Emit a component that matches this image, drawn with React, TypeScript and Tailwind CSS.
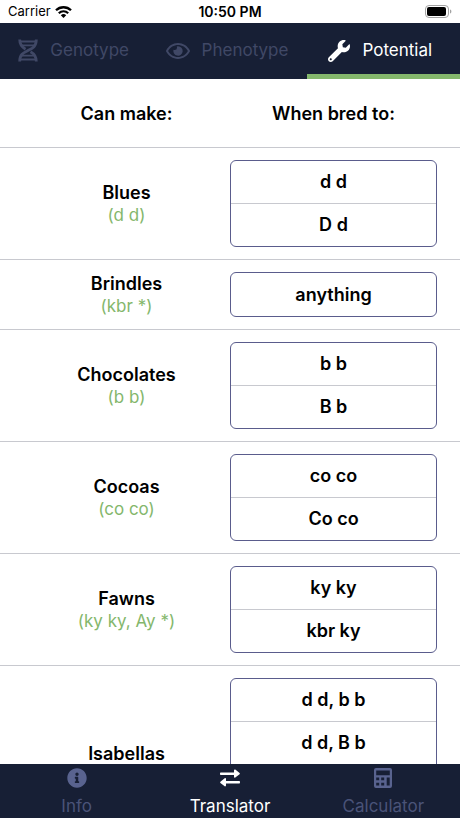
import type { ReactNode } from 'react'
import { FaInfoCircle, FaRegEye, FaWrench } from 'react-icons/fa'

interface Pairing {
  name: string
  genotype: string
  mates: string[]
}

const pairings: Pairing[] = [
  { name: 'Blues', genotype: '(d d)', mates: ['d d', 'D d'] },
  { name: 'Brindles', genotype: '(kbr *)', mates: ['anything'] },
  { name: 'Chocolates', genotype: '(b b)', mates: ['b b', 'B b'] },
  { name: 'Cocoas', genotype: '(co co)', mates: ['co co', 'Co co'] },
  { name: 'Fawns', genotype: '(ky ky, Ay *)', mates: ['ky ky', 'kbr ky'] },
  { name: 'Isabellas', genotype: '(d d, b b)', mates: ['d d, b b', 'd d, B b', 'D d, b b', 'D d, B b'] },
]

function WifiIcon() {
  return (
    <svg viewBox="0 0 17 12" className="w-[17px] h-3" fill="none" stroke="currentColor" aria-hidden="true">
      <path d="M1 4.3a10.700 10.700 0 0 1 15 0" strokeWidth="2.300" />
      <path d="M3.800 7.200a6.700 6.700 0 0 1 9.400 0" strokeWidth="2.200" />
      <path d="M8.500 12 5.800 9.300a3.900 3.900 0 0 1 5.400 0Z" fill="currentColor" stroke="none" />
    </svg>
  )
}

function BatteryIcon() {
  return (
    <svg viewBox="0 0 27 13" className="w-[27px] h-[13px]" aria-hidden="true">
      <rect x="0.500" y="0.500" width="23" height="12" rx="3.500" fill="none" stroke="#a3a3a3" />
      <rect x="2" y="2" width="19" height="9" rx="2" fill="#000" />
      <path d="M25 4.500v4c.9-.3 1.400-1.100 1.400-2s-.5-1.700-1.400-2Z" fill="#a3a3a3" />
    </svg>
  )
}

function DnaIcon() {
  return (
    <svg viewBox="0 0 20 23" className="w-5 h-[23px]" fill="none" stroke="currentColor" aria-hidden="true">
      <path d="M18.300 0.500C18.300 8 14 9.500 10 11.500S1.700 15 1.700 22.500" strokeWidth="2.800" />
      <path d="M1.700 0.500C1.700 6.500 4.500 8.500 7.500 10.200M18.300 22.500c0-6-2.800-8-5.800-9.700" strokeWidth="2.800" />
      <path d="M2 2.500h16M4 6.300h12M4 16.700h12M2 20.500h16" strokeWidth="1.800" />
    </svg>
  )
}

function SwapIcon() {
  return (
    <svg viewBox="0 0 22 18" className="w-[22px] h-[18px]" fill="currentColor" aria-hidden="true">
      <path d="M1.500 3.500H15V1.200c0-.8.8-1 1.300-.6l4.300 3.500c.4.400.4.800 0 1.200l-4.300 3.300c-.5.400-1.300.1-1.300-.6V6H1.500c-.7 0-.7-2.500 0-2.500Z" />
      <path d="M20.500 12H7V9.800c0-.8-.8-1-1.300-.6l-4.300 3.500c-.4.400-.4.800 0 1.200l4.300 3.300c.5.400 1.300.1 1.300-.6v-2.100h13.500c.7 0 .7-2.500 0-2.500Z" />
    </svg>
  )
}

function CalculatorIcon() {
  return (
    <svg viewBox="0 0 18 20" className="w-[18px] h-5" fill="currentColor" fillRule="evenodd" aria-hidden="true">
      <path d="M2 0h14a2 2 0 0 1 2 2v16a2 2 0 0 1-2 2H2a2 2 0 0 1-2-2V2a2 2 0 0 1 2-2ZM2.200 2.500v4.700h13.600V2.500ZM2.200 9.500v2.800h3V9.500ZM7.200 9.500v2.800h3V9.500ZM2.200 14.700v2.800h3v-2.800ZM7.200 14.700v2.800h3v-2.800ZM12.700 9.500v8h3v-8Z" />
    </svg>
  )
}

function StatusBar() {
  return (
    <div className="grid grid-cols-3 items-center h-[23px] shrink-0 px-2 text-[13px]">
      <span className="flex items-center gap-1">
        Carrier
        <WifiIcon />
      </span>
      <span className="text-center text-sm font-semibold">10:50 PM</span>
      <span className="flex justify-end">
        <BatteryIcon />
      </span>
    </div>
  )
}

interface TabProps {
  icon: ReactNode
  label: string
  active?: boolean
}

function TopTab({ icon, label, active }: TabProps) {
  return (
    <button
      type="button"
      aria-pressed={!!active}
      className={`flex items-center justify-center gap-3 border-b-[5px] pt-1 pr-1.5 text-[17px] ${
        active ? 'border-[#84b76c] text-white' : 'border-transparent text-[#404866]'
      }`}
    >
      {icon}
      {label}
    </button>
  )
}

function BottomTab({ icon, label, active }: TabProps) {
  return (
    <button
      type="button"
      aria-pressed={!!active}
      className={`flex flex-col items-center justify-between pt-1 text-[17px] leading-6 ${
        active ? 'text-white' : 'text-[#4a5378]'
      }`}
    >
      <span className={`flex items-center h-5 ${active ? 'text-white' : 'text-[#59638f]'}`}>{icon}</span>
      {label}
    </button>
  )
}

function PairingRow({ name, genotype, mates }: Pairing) {
  return (
    <tr className="border-t border-[#c8c9cf]">
      <th scope="row" className="pl-[23px] pt-0.5 font-normal">
        <p className="font-semibold">{name}</p>
        <p className="text-[17px] text-[#84b76c]">{genotype}</p>
      </th>
      <td className="py-3 pr-[23px]">
        <ul className="rounded-md border border-[#5a5c8c] divide-y divide-[#c8c9cf] font-semibold">
          {mates.map((mate) => (
            <li key={mate} className="flex items-center justify-center box-content h-[41px] only:h-[42px] pt-px">
              {mate}
            </li>
          ))}
        </ul>
      </td>
    </tr>
  )
}

export default function App() {
  return (
    <div className="flex flex-col h-screen bg-white text-black font-['Inter',sans-serif]">
      <StatusBar />
      <nav className="grid grid-cols-3 h-14 shrink-0 bg-[#171f35]">
        <TopTab icon={<DnaIcon />} label="Genotype" />
        <TopTab icon={<FaRegEye className="size-6" />} label="Phenotype" />
        <TopTab icon={<FaWrench className="size-[22px]" />} label="Potential" active />
      </nav>
      <main className="flex-1 min-h-0 overflow-y-auto [scrollbar-width:none]">
        <table className="w-full table-fixed border-collapse text-center text-lg leading-[22px]">
          <thead>
            <tr className="h-[68px]">
              <th scope="col" className="pl-[23px] pt-0.5 font-semibold">Can make:</th>
              <th scope="col" className="pr-[23px] pt-0.5 font-semibold">When bred to:</th>
            </tr>
          </thead>
          <tbody>
            {pairings.map((pairing) => (
              <PairingRow key={pairing.name} {...pairing} />
            ))}
          </tbody>
        </table>
      </main>
      <nav className="grid grid-cols-3 h-[54px] shrink-0 bg-[#171f35]">
        <BottomTab icon={<FaInfoCircle className="size-5" />} label="Info" />
        <BottomTab icon={<SwapIcon />} label="Translator" active />
        <BottomTab icon={<CalculatorIcon />} label="Calculator" />
      </nav>
    </div>
  )
}
